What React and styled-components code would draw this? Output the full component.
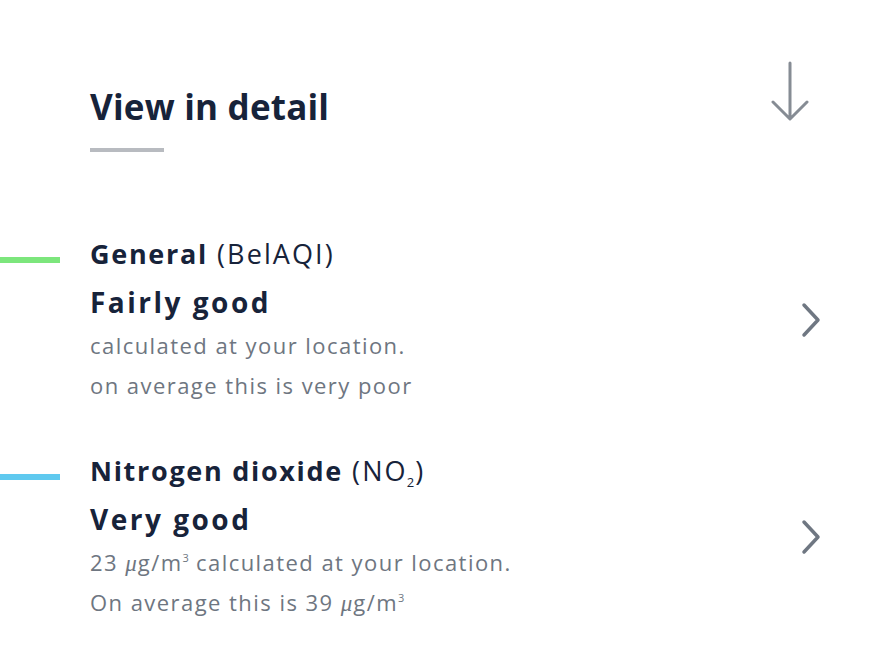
import React from "react";
import styled, { createGlobalStyle } from "styled-components";

const GlobalStyle = createGlobalStyle`
  body {
    margin: 0;
    background: #ffffff;
    font-family: "Open Sans", "Liberation Sans", sans-serif;
    color: #17233a;
  }
`;

const Page = styled.div`
  width: 880px;
  height: 654px;
  overflow: hidden;
`;

const Header = styled.header`
  display: flex;
  justify-content: space-between;
  align-items: flex-start;
  padding: 61px 70px 0 90px;
`;

const TitleBlock = styled.div`
  padding-top: 26px;
`;

const Title = styled.h2`
  margin: 0;
  font-size: 35px;
  line-height: 40px;
  font-weight: 700;
  letter-spacing: 0.2px;
`;

const Underline = styled.div`
  width: 74px;
  height: 4px;
  margin-top: 21px;
  background: #b8bbc0;
`;

const List = styled.div`
  margin-top: 82px;
  display: flex;
  flex-direction: column;
  gap: 46px;
`;

const Row = styled.div`
  display: grid;
  grid-template-columns: 60px 1fr auto;
  column-gap: 30px;
  padding-right: 58px;
`;

const Bar = styled.div`
  height: 6px;
  margin-top: 23px;
  background: ${(p) => p.$color};
`;

const Content = styled.div`
  display: flex;
  flex-direction: column;
`;

const Name = styled.div`
  height: 40px;
  font-size: 27px;
  line-height: 40px;
  font-weight: 400;
  letter-spacing: 2.1px;
  white-space: nowrap;
  strong {
    font-weight: 700;
    letter-spacing: 1.7px;
  }
  sub {
    font-size: 13px;
    vertical-align: -6px;
    line-height: 0;
    letter-spacing: 0;
    margin: 0 1px 0 -1px;
  }
`;

const Status = styled.div`
  height: 40px;
  margin-top: 8px;
  font-size: 28px;
  line-height: 40px;
  font-weight: 700;
  letter-spacing: 2.5px;
`;

const Sub = styled.div`
  height: 40px;
  margin-top: ${(p) => (p.$first ? "3px" : "0")};
  font-size: 22px;
  line-height: 40px;
  color: #6e7681;
  letter-spacing: 1.45px;
  white-space: nowrap;
  sup {
    font-size: 11px;
    vertical-align: 9px;
    line-height: 0;
    letter-spacing: 0;
  }
`;

const Mu = styled.span`
  font-family: "Liberation Serif", "DejaVu Serif", serif;
  font-style: italic;
  font-size: 23px;
  line-height: 1;
  letter-spacing: 0;
  margin-right: 1px;
`;

const Chevron = styled.svg`
  align-self: center;
  width: 22px;
  height: 36px;
`;

const ArrowDown = () => (
  <svg width="40" height="60" viewBox="0 0 40 60">
    <path
      d="M20 2 V57 M3 41 L20 58 L37 41"
      fill="none"
      stroke="#868c94"
      strokeWidth="3"
      strokeLinecap="round"
      strokeLinejoin="round"
    />
  </svg>
);

const Next = () => (
  <Chevron viewBox="0 0 22 36">
    <path
      d="M4 3 L18 18 L4 33"
      fill="none"
      stroke="#6f7782"
      strokeWidth="3.5"
      strokeLinecap="round"
      strokeLinejoin="round"
    />
  </Chevron>
);

const Unit = () => (
  <>
    <Mu>μ</Mu>g/m<sup>3</sup>
  </>
);

export default function App() {
  return (
    <Page>
      <GlobalStyle />
      <Header>
        <TitleBlock>
          <Title>View in detail</Title>
          <Underline />
        </TitleBlock>
        <ArrowDown />
      </Header>
      <List>
        <Row>
          <Bar $color="#7ce67c" />
          <Content>
            <Name>
              <strong>General</strong> (BelAQI)
            </Name>
            <Status>Fairly good</Status>
            <Sub $first>calculated at your location.</Sub>
            <Sub>on average this is very poor</Sub>
          </Content>
          <Next />
        </Row>
        <Row>
          <Bar $color="#5fc9ef" />
          <Content>
            <Name>
              <strong>Nitrogen dioxide</strong> (NO<sub>2</sub>)
            </Name>
            <Status>Very good</Status>
            <Sub $first>
              23 <Unit /> calculated at your location.
            </Sub>
            <Sub>
              On average this is 39 <Unit />
            </Sub>
          </Content>
          <Next />
        </Row>
      </List>
    </Page>
  );
}
